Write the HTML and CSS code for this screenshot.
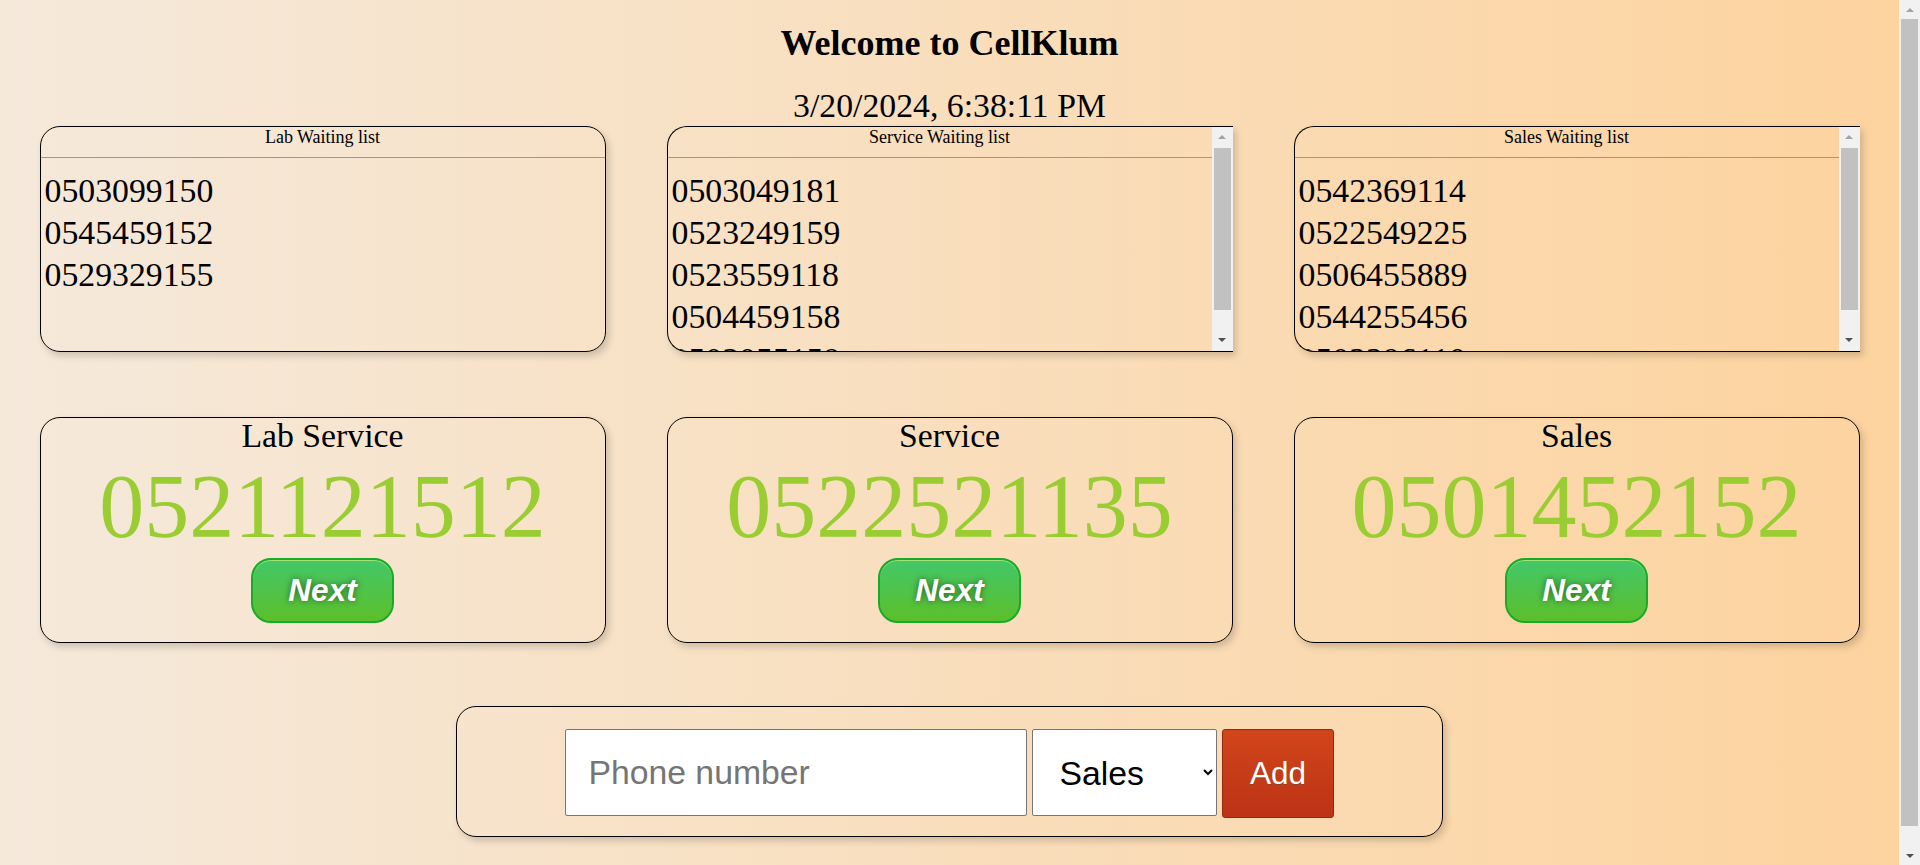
FILE: index.html
```html
<!DOCTYPE html>
<html lang="en">
<head>
<meta charset="utf-8">
<title>CellKlum</title>
<link rel="stylesheet" href="styles.css">
</head>
<body>
  <h1 class="title">Welcome to CellKlum</h1>
  <div class="clock">3/20/2024, 6:38:11 PM</div>

  <div class="row lists">
    <div class="list-box">
      <div class="list-scroll">
        <div class="list-head">Lab Waiting list</div>
        <div class="list-items">
          <div class="item">0503099150</div>
          <div class="item">0545459152</div>
          <div class="item">0529329155</div>
        </div>
      </div>
    </div>
    <div class="list-box has-sb">
      <div class="list-scroll">
        <div class="list-head">Service Waiting list</div>
        <div class="list-items">
          <div class="item">0503049181</div>
          <div class="item">0523249159</div>
          <div class="item">0523559118</div>
          <div class="item">0504459158</div>
          <div class="item">0503055159</div>
        </div>
      </div>
      <div class="box-sb">
        <div class="sb-btn"><span class="arrow-up"></span></div>
        <div class="sb-track"><div class="sb-thumb box-thumb"></div></div>
        <div class="sb-btn"><span class="arrow-down"></span></div>
      </div>
    </div>
    <div class="list-box has-sb">
      <div class="list-scroll">
        <div class="list-head">Sales Waiting list</div>
        <div class="list-items">
          <div class="item">0542369114</div>
          <div class="item">0522549225</div>
          <div class="item">0506455889</div>
          <div class="item">0544255456</div>
          <div class="item">0502296110</div>
        </div>
      </div>
      <div class="box-sb">
        <div class="sb-btn"><span class="arrow-up"></span></div>
        <div class="sb-track"><div class="sb-thumb box-thumb"></div></div>
        <div class="sb-btn"><span class="arrow-down"></span></div>
      </div>
    </div>
  </div>

  <div class="row current">
    <div class="cur-box">
      <div class="cur-title">Lab Service</div>
      <div class="cur-num">0521121512</div>
      <button class="next-btn" type="button">Next</button>
    </div>
    <div class="cur-box">
      <div class="cur-title">Service</div>
      <div class="cur-num">0522521135</div>
      <button class="next-btn" type="button">Next</button>
    </div>
    <div class="cur-box">
      <div class="cur-title">Sales</div>
      <div class="cur-num">0501452152</div>
      <button class="next-btn" type="button">Next</button>
    </div>
  </div>

  <form class="form-box" onsubmit="return false">
    <input class="phone-input" type="text" placeholder="Phone number">
    <select class="dept-select">
      <option>Lab</option>
      <option>Service</option>
      <option selected>Sales</option>
    </select>
    <button class="add-btn" type="submit">Add</button>
  </form>

  <div class="page-sb">
    <div class="sb-btn page-btn"><span class="arrow-up"></span></div>
    <div class="sb-track"><div class="sb-thumb page-thumb"></div></div>
    <div class="sb-btn page-btn"><span class="arrow-down"></span></div>
  </div>
</body>
</html>
```

FILE: styles.css
```css
html {
  background: linear-gradient(to right, #f5e9db, #fdd39e);
}

body {
  margin: 0;
  padding: 0 30px 0 9px;
  font-family: "Liberation Serif", "Times New Roman", serif;
  color: #000;
}

.title {
  font-size: 36px;
  font-weight: bold;
  text-align: center;
  margin: 22.5px 0 22.3px;
  line-height: 41.4px;
}

.clock {
  font-size: 33.75px;
  line-height: 39.5px;
  text-align: center;
}

.row {
  display: flex;
  justify-content: space-around;
}

.lists {
  margin-bottom: 65px;
}

/* waiting lists */
.list-box {
  width: 566px;
  height: 226px;
  box-sizing: border-box;
  border: 1px solid #000;
  border-radius: 20px;
  box-shadow: 3px 4px 7px rgba(0, 0, 0, 0.17);
  display: flex;
}

.list-box.has-sb {
  border-right: none;
  border-radius: 20px 0 0 20px;
}

.list-scroll {
  flex: 1;
  min-width: 0;
  overflow: hidden;
  border-radius: 19px;
}

.has-sb .list-scroll {
  border-radius: 19px 0 0 19px;
}

.list-head {
  font-size: 18px;
  line-height: 21px;
  text-align: center;
  padding-bottom: 9px;
  border-bottom: 1px solid #999;
}

.list-items {
  padding: 12px 0 0 4px;
  font-size: 33.75px;
  line-height: 42.2px;
}

/* drawn scrollbars */
.box-sb {
  width: 21px;
  flex: none;
  background: #f1f1f1;
  display: flex;
  flex-direction: column;
}

.sb-btn {
  height: 21px;
  flex: none;
  display: flex;
  align-items: center;
  justify-content: center;
}

.sb-track {
  flex: 1;
  padding: 0 2px;
}

.sb-thumb {
  background: #c1c1c1;
}

.box-thumb {
  height: 162px;
}

.arrow-up {
  width: 0;
  height: 0;
  border-left: 4px solid transparent;
  border-right: 4px solid transparent;
  border-bottom: 4px solid #a3a3a3;
}

.arrow-down {
  width: 0;
  height: 0;
  border-left: 4px solid transparent;
  border-right: 4px solid transparent;
  border-top: 4px solid #505050;
}

.page-sb {
  position: fixed;
  top: 0;
  right: 0;
  width: 21px;
  height: 100vh;
  background: #f1f1f1;
  display: flex;
  flex-direction: column;
}

.page-btn {
  height: 19px;
}

.page-thumb {
  height: 807px;
}

/* now serving */
.cur-box {
  width: 566px;
  height: 226px;
  box-sizing: border-box;
  border: 1px solid #000;
  border-radius: 20px;
  box-shadow: 3px 4px 7px rgba(0, 0, 0, 0.17);
  display: flex;
  flex-direction: column;
  align-items: center;
}

.cur-title {
  font-size: 33.75px;
  line-height: 36px;
}

.cur-num {
  font-size: 90px;
  line-height: 102px;
  color: #9acd32;
  margin-top: 2.6px;
}

.next-btn {
  font-family: "Liberation Sans", Arial, sans-serif;
  font-size: 31.5px;
  font-weight: bold;
  font-style: italic;
  line-height: 37px;
  color: #fff;
  padding: 12px 35.5px;
  border: 2px solid #18ab29;
  border-radius: 20px;
  background: linear-gradient(to bottom, #44c767 5%, #5cbf2a 100%);
  box-shadow: inset 0 1px 0 0 #a4e271;
  text-shadow: 0 0 6px rgba(0, 0, 0, 0.5);
  cursor: pointer;
}

/* add form */
.form-box {
  width: fit-content;
  margin: 63.5px auto 46px;
  border: 1px solid #000;
  border-radius: 20px;
  box-shadow: 3px 4px 7px rgba(0, 0, 0, 0.17);
  padding: 22px 108px 17.5px;
  display: flex;
  align-items: flex-start;
}

.phone-input {
  width: 462px;
  height: 87px;
  box-sizing: border-box;
  border: 1px solid #767676;
  border-radius: 2px;
  padding: 0 22.5px;
  font-family: "Liberation Sans", Arial, sans-serif;
  font-size: 33.75px;
  background: #fff;
  margin: 0 4.6px 0 0;
}

.phone-input::placeholder {
  color: #757575;
}

.dept-select {
  width: 185px;
  height: 87px;
  box-sizing: border-box;
  border: 1px solid #767676;
  border-radius: 2px;
  padding: 0 0 0 23px;
  font-family: "Liberation Sans", Arial, sans-serif;
  font-size: 33.75px;
  background-color: #fff;
  color: #000;
  margin: 0 5.6px 0 0;
}

.add-btn {
  width: 112px;
  height: 89px;
  box-sizing: border-box;
  border: 1px solid #942911;
  border-radius: 3px;
  background: linear-gradient(to bottom, #d0451b 5%, #bc3315 100%);
  color: #fff;
  font-family: "Liberation Sans", Arial, sans-serif;
  font-size: 31.5px;
  text-shadow: 0 1px 0 #854629;
  padding: 0;
  cursor: pointer;
}
```
